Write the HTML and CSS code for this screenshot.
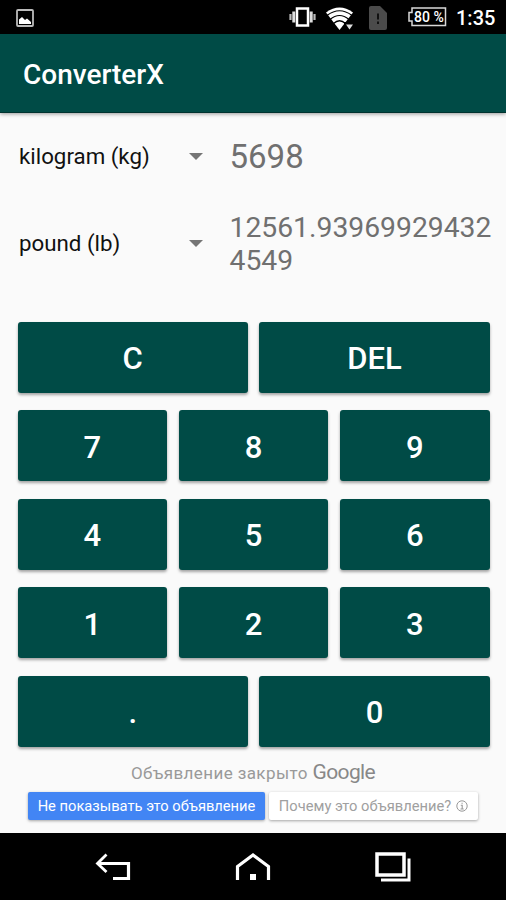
FILE: index.html
```
<!DOCTYPE html>
<html lang="ru">
<head>
    <meta charset="UTF-8">
    <meta name="viewport" content="width=device-width, initial-scale=1.0">
    <title>ConverterX</title>
    <link rel="stylesheet" href="styles.css">
</head>
<body>

<div class="statusbar">
    <svg class="icon-picture" width="18" height="18" viewBox="0 0 18 18">
        <rect x="1" y="1" width="16" height="16" rx="1" fill="none" stroke="#bbb" stroke-width="1.8"/>
        <path d="M3 15V10.500L6 8L9 11L11 9.500L15 13V15Z" fill="#fff"/>
    </svg>
    <div class="status-icons">
        <svg width="27" height="20" viewBox="0 0 27 20">
            <rect x="8" y="1.500" width="11" height="17" fill="none" stroke="#fff" stroke-width="2.500"/>
            <path d="M4.800 4.500V15.500M22.200 4.500V15.500" stroke="#ddd" stroke-width="3"/>
            <path d="M1.500 7V13M25.500 7V13" stroke="#bbb" stroke-width="2.200"/>
        </svg>
        <svg class="icon-wifi" width="28" height="24" viewBox="0 0 28 24">
            <path d="M0 5.500Q13.500-4.500 27 5.500L13.500 23Z" fill="#fff"/>
            <path d="M1 8.500Q13.500-1 26 8.500M4 12.500Q13.500 4.500 23 12.500M7.500 16.500Q13.500 11 19.500 16.500" fill="none" stroke="#000" stroke-width="1.200"/>
            <path d="M18 15H28V24H18Z" fill="#000"/>
            <path d="M20 17.500H27L23.500 22.500Z" fill="#ddd"/>
        </svg>
        <svg class="icon-sim" width="18" height="24" viewBox="0 0 18 24">
            <path d="M2 0H11L18 7V22Q18 24 16 24H2Q0 24 0 22V2Q0 0 2 0Z" fill="#4b4b4b"/>
            <path d="M8 7.500H10V13.500H8ZM8 15.500H10V18H8Z" fill="#111"/>
        </svg>
        <div class="battery">
            <svg width="40" height="20" viewBox="0 0 40 20">
                <path d="M5 1H38.500V18.500H5V14H2V5.500H5Z" fill="none" stroke="#d8d8d8" stroke-width="1.500"/>
            </svg>
            <span class="battery-level">80 %</span>
        </div>
    </div>
    <span class="clock">1:35</span>
</div>

<div class="toolbar">ConverterX</div>

<div class="content">
    <div class="row row-from">
        <div class="spinner">kilogram (kg)</div>
        <div class="arrow"></div>
        <div class="value">5698</div>
    </div>
    <div class="row row-to">
        <div class="spinner">pound (lb)</div>
        <div class="arrow"></div>
        <div class="value result">12561.939699294324549</div>
    </div>

    <div class="keypad">
        <button class="key wide">C</button>
        <button class="key wide">DEL</button>
        <button class="key">7</button>
        <button class="key">8</button>
        <button class="key">9</button>
        <button class="key">4</button>
        <button class="key">5</button>
        <button class="key">6</button>
        <button class="key">1</button>
        <button class="key">2</button>
        <button class="key">3</button>
        <button class="key wide">.</button>
        <button class="key wide">0</button>
    </div>

    <div class="ad">
        <div class="ad-title">Объявление закрыто <span class="google">Google</span></div>
        <div class="ad-buttons">
            <div class="ad-hide">Не показывать это объявление</div>
            <div class="ad-why">
                <span>Почему это объявление?</span>
                <svg width="12" height="12" viewBox="0 0 12 12">
                    <circle cx="6" cy="6" r="5.200" fill="none" stroke="#999" stroke-width="1"/>
                    <path d="M4.800 5.300H6.200V9M4.500 9H7.700M5.500 3.200H6.700" fill="none" stroke="#999" stroke-width="1.100"/>
                </svg>
            </div>
        </div>
    </div>
</div>

<div class="navbar">
    <svg width="36" height="30" viewBox="0 0 36 30">
        <path d="M3 11.500H33.500V26.500H18" fill="none" stroke="#fff" stroke-width="3.200"/>
        <path d="M11.500 2.500L2.500 11.500L11.500 20" fill="none" stroke="#fff" stroke-width="2.800"/>
    </svg>
    <svg width="36" height="30" viewBox="0 0 36 30">
        <path d="M2.500 28V14.500L18 3L33.500 14.500V28" fill="none" stroke="#fff" stroke-width="3.200"/>
        <rect x="15" y="22" width="6" height="6" fill="#fff"/>
    </svg>
    <svg width="36" height="30" viewBox="0 0 36 30">
        <rect x="2" y="2" width="27" height="21" fill="none" stroke="#fff" stroke-width="3.500"/>
        <path d="M34 6.500V28H6" fill="none" stroke="#fff" stroke-width="3"/>
    </svg>
</div>

</body>
</html>
```
FILE: styles.css
```
* {
    box-sizing: border-box;
}
body {
    font-family: Roboto, "Noto Sans", sans-serif;
    margin: 0;
    height: 900px;
    display: flex;
    flex-direction: column;
    background-color: #fafafa;
    overflow: hidden;
}
svg {
    display: block;
    flex: none;
}
.statusbar {
    height: 34px;
    display: flex;
    align-items: center;
    padding: 0 10px 0 16px;
    background-color: #000;
    color: #fff;
}
.status-icons {
    display: flex;
    align-items: center;
    margin-left: auto;
}
.icon-picture {
    margin-top: 1px;
}
.icon-wifi {
    margin-left: 10px;
    margin-top: 3px;
}
.icon-sim {
    margin-left: 15px;
    margin-top: 2px;
}
.battery {
    position: relative;
    margin-left: 20px;
}
.battery-level {
    position: absolute;
    top: 2px;
    left: 7px;
    font-size: 14px;
    line-height: 16px;
    font-weight: 500;
    white-space: nowrap;
}
.clock {
    width: 40px;
    margin-left: 9px;
    font-size: 20px;
    font-weight: 500;
    line-height: 34px;
    margin-top: 2px;
}
.toolbar {
    height: 79px;
    padding: 2px 23px 0;
    background-color: #004b46;
    border-bottom: 1px solid #00332f;
    box-shadow: 0 1px 4px rgba(0, 0, 0, 0.4);
    color: #fff;
    font-size: 28px;
    font-weight: 500;
    line-height: 78px;
}
.content {
    flex: 1;
}
.row {
    display: flex;
    align-items: center;
    padding-left: 19px;
}
.row-from {
    height: 87px;
}
.row-to {
    height: 87px;
}
.spinner {
    width: 170px;
    padding-bottom: 1px;
    font-size: 22.300px;
    color: #111;
}
.arrow {
    border-left: 7px solid transparent;
    border-right: 7px solid transparent;
    border-top: 7px solid #757575;
}
.value {
    margin-left: 26.500px;
    font-size: 33px;
    color: #707070;
}
.result {
    width: 268px;
    font-size: 28.300px;
    line-height: 33px;
    word-break: break-all;
}
.keypad {
    display: grid;
    grid-template-columns: repeat(6, 1fr);
    grid-auto-rows: 71.300px;
    gap: 17.200px 11.700px;
    margin-top: 34.600px;
    padding: 0 16.500px 0 17.700px;
}
.key {
    grid-column: span 2;
    padding: 3px 0 0;
    border: none;
    border-radius: 3px;
    background-color: #004b46;
    box-shadow: 0 2px 3px rgba(0, 0, 0, 0.35);
    color: #fff;
    font-family: inherit;
    font-size: 31px;
    font-weight: 500;
}
.wide {
    grid-column: span 3;
}
.ad {
    padding: 12px 28px 0;
}
.ad-title {
    height: 26px;
    line-height: 26px;
    text-align: center;
    font-size: 17px;
    letter-spacing: 0.400px;
    color: #999;
    white-space: nowrap;
}
.google {
    font-size: 21px;
    letter-spacing: -0.600px;
    color: #888;
}
.ad-buttons {
    display: flex;
    gap: 4px;
    margin-top: 7px;
}
.ad-hide, .ad-why {
    display: flex;
    align-items: center;
    justify-content: center;
    height: 28px;
    border-radius: 2px;
    font-size: 14.700px;
    white-space: nowrap;
    box-shadow: 0 1px 3px rgba(0, 0, 0, 0.35);
}
.ad-hide {
    width: 237px;
    background-color: #4285f4;
    color: #fff;
}
.ad-why {
    width: 209px;
    gap: 5px;
    background-color: #fff;
    color: #a0a0a0;
}
.navbar {
    display: flex;
    justify-content: center;
    gap: 104px;
    height: 67px;
    padding-top: 19px;
    background-color: #000;
}
```
